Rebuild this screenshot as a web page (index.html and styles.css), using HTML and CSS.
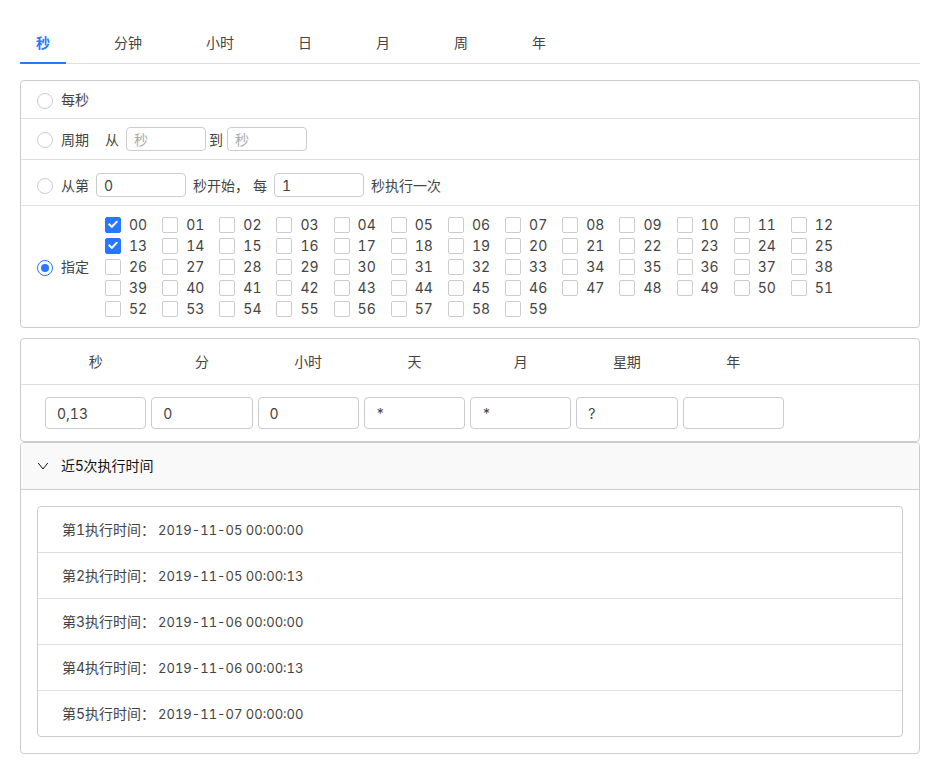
FILE: index.html
```html
<!DOCTYPE html>
<html lang="zh-CN">
<head>
<meta charset="utf-8">
<meta name="viewport" content="width=device-width, initial-scale=1">
<title>Cron</title>
<link rel="stylesheet" href="styles.css">
</head>
<body>
<main class="cron">
  <nav class="tabs" role="tablist">
    <button class="tab tab-active" type="button" role="tab" aria-selected="true">秒</button>
    <button class="tab" type="button" role="tab" aria-selected="false">分钟</button>
    <button class="tab" type="button" role="tab" aria-selected="false">小时</button>
    <button class="tab" type="button" role="tab" aria-selected="false">日</button>
    <button class="tab" type="button" role="tab" aria-selected="false">月</button>
    <button class="tab" type="button" role="tab" aria-selected="false">周</button>
    <button class="tab" type="button" role="tab" aria-selected="false">年</button>
  </nav>

  <form class="card options">
    <div class="row">
      <label class="choice"><input class="radio" type="radio" name="mode">每秒</label>
    </div>
    <div class="row">
      <label class="choice"><input class="radio" type="radio" name="mode">周期</label>
      <div class="fields range">
        <label for="range-from">从</label>
        <input class="input small" id="range-from" type="text" placeholder="秒">
      </div>
      <div class="fields range-end">
        <label for="range-to">到</label>
        <input class="input small" id="range-to" type="text" placeholder="秒">
      </div>
    </div>
    <div class="row row-step">
      <label class="choice"><input class="radio" type="radio" name="mode">从第</label>
      <div class="fields step">
        <input class="input medium" id="step-start" type="text" value="0" aria-label="从第">
        <label for="step-every">秒开始， 每</label>
        <input class="input medium" id="step-every" type="text" value="1">
        <span>秒执行一次</span>
      </div>
    </div>
    <div class="row">
      <label class="choice"><input class="radio" type="radio" name="mode" checked>指定</label>
      <div class="seconds" id="seconds"></div>
    </div>
  </form>

  <section class="card">
    <div class="columns columns-head">
      <label for="c-second">秒</label>
      <label for="c-minute">分</label>
      <label for="c-hour">小时</label>
      <label for="c-day">天</label>
      <label for="c-month">月</label>
      <label for="c-week">星期</label>
      <label for="c-year">年</label>
    </div>
    <div class="columns">
      <input class="input large" id="c-second" type="text" value="0,13">
      <input class="input large" id="c-minute" type="text" value="0">
      <input class="input large" id="c-hour" type="text" value="0">
      <input class="input large" id="c-day" type="text" value="*">
      <input class="input large" id="c-month" type="text" value="*">
      <input class="input large" id="c-week" type="text" value="?">
      <input class="input large" id="c-year" type="text" value="">
    </div>
  </section>

  <section class="card">
    <button class="panel-head" type="button" aria-expanded="true">
      <svg class="arrow" viewBox="0 0 12 12" aria-hidden="true"><path d="M1.2 3 6 9l4.8-6"/></svg>
      近5次执行时间
    </button>
    <div class="panel-body">
      <ul class="card list">
        <li><span>第1执行时间：</span><time>2019-11-05 00:00:00</time></li>
        <li><span>第2执行时间：</span><time>2019-11-05 00:00:13</time></li>
        <li><span>第3执行时间：</span><time>2019-11-06 00:00:00</time></li>
        <li><span>第4执行时间：</span><time>2019-11-06 00:00:13</time></li>
        <li><span>第5执行时间：</span><time>2019-11-07 00:00:00</time></li>
      </ul>
    </div>
  </section>
</main>
<script src="script.js"></script>
</body>
</html>
```
FILE: styles.css
```css
* {
  box-sizing: border-box;
}

:root {
  --blue: #2878ff;
  --text: #444;
  --border: #ccc;
  --divider: #e0e0e0;
}

body {
  margin: 0;
  padding: 20px;
  background: #fff;
  color: var(--text);
  font: 14px/21px Inter, "Noto Sans CJK SC", sans-serif;
}

button,
input {
  margin: 0;
  font: inherit;
  color: inherit;
}

.tabs {
  display: flex;
  gap: 32px;
  margin-bottom: 16px;
  box-shadow: inset 0 -1px var(--divider);
}

.tab {
  padding: 12px 16px 9px;
  border: 0;
  border-bottom: 2px solid transparent;
  background: none;
}

.tab-active {
  border-color: var(--blue);
  color: var(--blue);
  font-weight: 700;
}

.card {
  border: 1px solid var(--border);
  border-radius: 4px;
}

.options {
  margin-bottom: 10px;
}

.row {
  display: flex;
  align-items: center;
  padding: 8px 16px;
  border-bottom: 1px solid var(--divider);
}

.row:last-child {
  border-bottom: 0;
}

.row-step {
  padding-top: 13px;
}

.choice {
  display: flex;
  align-items: center;
  gap: 8px;
}

.radio {
  appearance: none;
  flex: none;
  display: grid;
  place-items: center;
  width: 16px;
  height: 16px;
  margin-top: 2px;
  border: 1px solid var(--border);
  border-radius: 50%;
  background: #fff;
}

.radio:checked {
  border-color: var(--blue);
}

.radio:checked::after {
  content: "";
  width: 8px;
  height: 8px;
  border-radius: 50%;
  background: var(--blue);
}

.fields {
  display: flex;
  align-items: center;
  gap: 7px;
}

.range {
  margin-left: 16px;
}

.range-end {
  gap: 4px;
  margin-left: 3px;
}

.step {
  margin-left: 7px;
}

.input {
  min-width: 0;
  border: 1px solid var(--border);
  border-radius: 4px;
  background: #fff;
  font-variant-numeric: tabular-nums;
}

.input::placeholder {
  color: #aaa;
  opacity: 1;
}

.small {
  width: 80px;
  height: 24px;
  padding: 0 7px;
}

.medium {
  width: 90px;
  height: 24px;
  padding: 0 7px;
}

.large {
  width: 100%;
  height: 32px;
  padding: 0 11px;
}

.seconds {
  flex: 1;
  display: grid;
  grid-template-columns: repeat(13, 1fr);
  margin: 0 55px 0 16px;
  font-variant-numeric: tabular-nums;
}

.second {
  display: flex;
  align-items: center;
  gap: 8px;
}

.checkbox {
  appearance: none;
  flex: none;
  display: grid;
  place-items: center;
  width: 16px;
  height: 16px;
  border: 1px solid var(--border);
  border-radius: 2px;
  background: #fff;
}

.checkbox:checked {
  border-color: var(--blue);
  background: var(--blue);
}

.checkbox:checked::after {
  content: "";
  width: 10px;
  height: 8px;
  background: #fff;
  clip-path: polygon(0 50%, 14% 32%, 38% 62%, 86% 0, 100% 16%, 39% 96%);
}

.columns {
  display: grid;
  grid-template-columns: repeat(8, 1fr);
  padding: 12px 24px;
}

.columns > * {
  justify-self: start;
  width: calc(100% - 5px);
}

.columns-head {
  border-bottom: 1px solid var(--divider);
  text-align: center;
}

.panel-head {
  display: flex;
  align-items: center;
  gap: 12px;
  width: 100%;
  padding: 12px 16px 13px;
  border: 0;
  border-bottom: 1px solid var(--border);
  border-radius: 3px 3px 0 0;
  background: #f9f9f9;
  color: #111;
}

.arrow {
  width: 12px;
  height: 12px;
  fill: none;
  stroke: currentColor;
}

.panel-body {
  padding: 16px;
}

.list {
  margin: 0;
  padding: 0;
  list-style: none;
  font-variant-numeric: tabular-nums;
}

.list li {
  display: flex;
  align-items: flex-end;
  gap: 3px;
  height: 45px;
  padding: 12px 24px;
}

.list li + li {
  height: 46px;
  border-top: 1px solid var(--divider);
}

.list time {
  font-size: 13px;
  line-height: 20px;
}
```
FILE: script.js
```js
const group = document.getElementById("seconds");
const selected = [0, 13];

for (let i = 0; i < 60; i += 1) {
  const label = document.createElement("label");
  label.className = "second";
  const box = document.createElement("input");
  box.type = "checkbox";
  box.className = "checkbox";
  box.checked = selected.includes(i);
  label.append(box, String(i).padStart(2, "0"));
  group.append(label);
}
```
